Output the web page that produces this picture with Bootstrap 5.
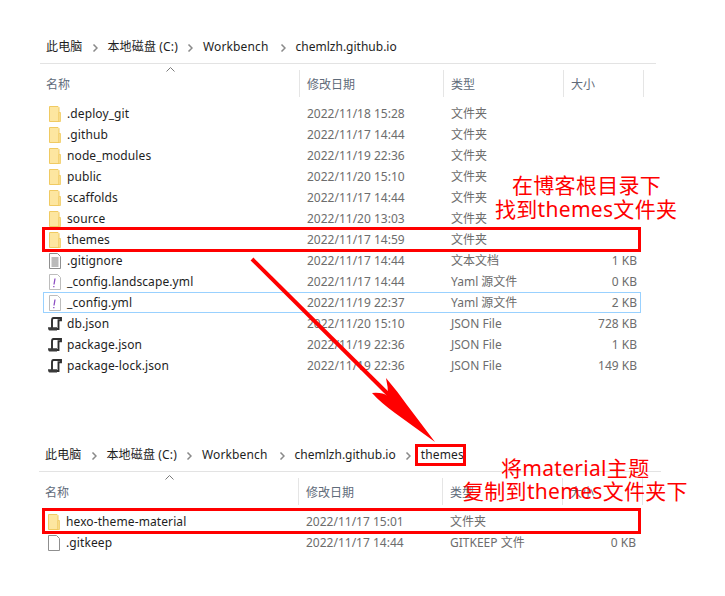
<!DOCTYPE html>
<html lang="en">
<head>
    <meta charset="UTF-8">
    <title>themes 文件夹</title>
    <link href="https://cdn.jsdelivr.net/npm/bootstrap@5.3.0/dist/css/bootstrap.min.css" rel="stylesheet">
    <style>
        body {
            background: #fff;
            font-family: "Noto Sans", "Noto Sans CJK SC", sans-serif;
            font-size: 12px;
            line-height: 21px;
            color: #1e1e1e;
        }
        .sheet {
            position: relative;
            width: 725px;
            height: 596px;
            overflow: hidden;
        }
        .pane-one { padding: 36px 0 0 40px; width: 656px; }
        .pane-two { padding: 0 0 0 39px; width: 661px; margin-top: 68px; }
        .crumbs {
            height: 21px;
            padding-left: 6px;
            letter-spacing: .15px;
        }
        .crumb-sep {
            width: 25px;
            text-align: center;
            color: #8a8a8a;
        }
        .crumb-sep svg { vertical-align: -1px; }
        .crumb-wide { margin-right: 2px; }
        .crumb-path { letter-spacing: 0; }
        .head-row {
            position: relative;
            height: 34px;
            margin-top: 6px;
            border-top: 1px solid #e3e3e3;
            padding-top: 6px;
            color: #5f6b7a;
        }
        .sort-mark { position: absolute; left: 126px; top: 3px; }
        .h-cell {
            height: 27px;
            line-height: 29px;
            padding-left: 7px;
            border-right: 1px solid #e5e5e5;
        }
        .h-cell.c-name { padding-left: 6px; }
        .c-name { width: 260px; flex: none; }
        .c-date { width: 144px; flex: none; }
        .c-type { width: 120px; flex: none; }
        .c-size { width: 80px; flex: none; }
        .file-row {
            height: 21px;
            color: #6d6d6d;
        }
        .file-row .c-name {
            color: #1e1e1e;
            display: flex;
            align-items: center;
            padding-left: 7px;
            letter-spacing: .1px;
        }
        .file-row .c-name svg { flex: none; margin-right: 4px; }
        .file-row .c-date { padding-left: 7px; }
        .file-row .c-type { padding-left: 7px; }
        .file-row .c-size { text-align: right; padding-right: 7px; }
        .list-gap { padding-top: 6px; }
        .picked { outline: 1px solid #99d1ff; outline-offset: -1px; width: 598px; margin-left: 3px; }
        .file-row.picked .c-name { width: 257px; padding-left: 4px; }
        .mark-box {
            position: absolute;
            border: 3px solid #f00;
        }
        .box-a { left: 42px; top: 227px; width: 599px; height: 25px; }
        .box-b { left: 42px; top: 508px; width: 599px; height: 26px; }
        .box-c { left: 415px; top: 444px; width: 51px; height: 22px; }
        .note-text {
            position: absolute;
            color: #f00;
            font-size: 21px;
            line-height: 24px;
            letter-spacing: .3px;
            white-space: nowrap;
        }
        .note-a { left: 512px; top: 173px; }
        .note-b { left: 495px; top: 197px; }
        .note-c { left: 501px; top: 456px; }
        .note-d { left: 463px; top: 479px; }
        .arrow-layer { position: absolute; left: 0; top: 0; }
    </style>
</head>
<body>
<svg width="0" height="0" class="position-absolute">
    <symbol id="ico-folder" viewBox="0 0 16 16">
        <path d="M2.500 .5h8.500l1 1v14H2.500z" fill="#fde6a0" stroke="#f0ca62"/>
        <path d="M12 6.500h1.500v9H12z" fill="#fde6a0" stroke="#f0ca62" stroke-width=".8"/>
    </symbol>
    <symbol id="ico-text" viewBox="0 0 16 16">
        <path d="M2.500 .5h8l3 3v12h-11z" fill="#fff" stroke="#8f8f8f"/>
        <path d="M4.500 5h7M4.500 7h7M4.500 9h7M4.500 11h7M4.500 13h7" stroke="#777" fill="none"/>
    </symbol>
    <symbol id="ico-yml" viewBox="0 0 16 16">
        <path d="M2.500 .5h8l3 3v12h-11z" fill="#fff" stroke="#bdbdbd"/>
        <path d="M8 4.500 7 10.500M6.800 12v1.200" stroke="#8d4fc4" stroke-width="1.300" fill="none"/>
    </symbol>
    <symbol id="ico-json" viewBox="0 0 16 16">
        <path d="M6.500 2H14v2.200h-2.500V13H5V4.500C5 3 5.500 2 6.500 2z" fill="#fff" stroke="#2e2e2e" stroke-width="1.900"/>
        <path d="M1 11.200h9V14.500H2.500C1.500 14.500 1 13 1 11.200z" fill="#3a3a3a"/>
    </symbol>
    <symbol id="ico-blank" viewBox="0 0 16 16">
        <path d="M2.500 .5h8l3 3v12h-11z" fill="#fff" stroke="#8f8f8f"/>
    </symbol>
    <symbol id="ico-sep" viewBox="0 0 6 8">
        <path d="M1.500 .5 5 4 1.500 7.500" fill="none" stroke="#8a8a8a" stroke-width="1.500"/>
    </symbol>
    <symbol id="ico-sort" viewBox="0 0 9 5">
        <path d="M.5 4.500 4.500 .5l4 4" fill="none" stroke="#7a7a7a"/>
    </symbol>
</svg>

<div class="sheet">
    <div class="pane-one">
        <div class="crumbs d-flex align-items-center">
            <span>此电脑</span>
            <span class="crumb-sep"><svg width="6" height="8"><use href="#ico-sep"/></svg></span>
            <span>本地磁盘 (C:)</span>
            <span class="crumb-sep"><svg width="6" height="8"><use href="#ico-sep"/></svg></span>
            <span class="crumb-wide">Workbench</span>
            <span class="crumb-sep"><svg width="6" height="8"><use href="#ico-sep"/></svg></span>
            <span class="crumb-path">chemlzh.github.io</span>
        </div>
        <div class="head-row d-flex">
            <svg class="sort-mark" width="9" height="5"><use href="#ico-sort"/></svg>
            <div class="h-cell c-name">名称</div>
            <div class="h-cell c-date">修改日期</div>
            <div class="h-cell c-type">类型</div>
            <div class="h-cell c-size">大小</div>
        </div>
        <div class="list-gap">
            <div class="file-row d-flex"><div class="c-name"><svg width="16" height="16"><use href="#ico-folder"/></svg>.deploy_git</div><div class="c-date">2022/11/18 15:28</div><div class="c-type">文件夹</div><div class="c-size"></div></div>
            <div class="file-row d-flex"><div class="c-name"><svg width="16" height="16"><use href="#ico-folder"/></svg>.github</div><div class="c-date">2022/11/17 14:44</div><div class="c-type">文件夹</div><div class="c-size"></div></div>
            <div class="file-row d-flex"><div class="c-name"><svg width="16" height="16"><use href="#ico-folder"/></svg>node_modules</div><div class="c-date">2022/11/19 22:36</div><div class="c-type">文件夹</div><div class="c-size"></div></div>
            <div class="file-row d-flex"><div class="c-name"><svg width="16" height="16"><use href="#ico-folder"/></svg>public</div><div class="c-date">2022/11/20 15:10</div><div class="c-type">文件夹</div><div class="c-size"></div></div>
            <div class="file-row d-flex"><div class="c-name"><svg width="16" height="16"><use href="#ico-folder"/></svg>scaffolds</div><div class="c-date">2022/11/17 14:44</div><div class="c-type">文件夹</div><div class="c-size"></div></div>
            <div class="file-row d-flex"><div class="c-name"><svg width="16" height="16"><use href="#ico-folder"/></svg>source</div><div class="c-date">2022/11/20 13:03</div><div class="c-type">文件夹</div><div class="c-size"></div></div>
            <div class="file-row d-flex"><div class="c-name"><svg width="16" height="16"><use href="#ico-folder"/></svg>themes</div><div class="c-date">2022/11/17 14:59</div><div class="c-type">文件夹</div><div class="c-size"></div></div>
            <div class="file-row d-flex"><div class="c-name"><svg width="16" height="16"><use href="#ico-text"/></svg>.gitignore</div><div class="c-date">2022/11/17 14:44</div><div class="c-type">文本文档</div><div class="c-size">1 KB</div></div>
            <div class="file-row d-flex"><div class="c-name"><svg width="16" height="16"><use href="#ico-yml"/></svg>_config.landscape.yml</div><div class="c-date">2022/11/17 14:44</div><div class="c-type">Yaml 源文件</div><div class="c-size">0 KB</div></div>
            <div class="file-row d-flex picked"><div class="c-name"><svg width="16" height="16"><use href="#ico-yml"/></svg>_config.yml</div><div class="c-date">2022/11/19 22:37</div><div class="c-type">Yaml 源文件</div><div class="c-size">2 KB</div></div>
            <div class="file-row d-flex"><div class="c-name"><svg width="16" height="16"><use href="#ico-json"/></svg>db.json</div><div class="c-date">2022/11/20 15:10</div><div class="c-type">JSON File</div><div class="c-size">728 KB</div></div>
            <div class="file-row d-flex"><div class="c-name"><svg width="16" height="16"><use href="#ico-json"/></svg>package.json</div><div class="c-date">2022/11/19 22:36</div><div class="c-type">JSON File</div><div class="c-size">1 KB</div></div>
            <div class="file-row d-flex"><div class="c-name"><svg width="16" height="16"><use href="#ico-json"/></svg>package-lock.json</div><div class="c-date">2022/11/19 22:36</div><div class="c-type">JSON File</div><div class="c-size">149 KB</div></div>
        </div>
    </div>

    <div class="pane-two">
        <div class="crumbs d-flex align-items-center">
            <span>此电脑</span>
            <span class="crumb-sep"><svg width="6" height="8"><use href="#ico-sep"/></svg></span>
            <span>本地磁盘 (C:)</span>
            <span class="crumb-sep"><svg width="6" height="8"><use href="#ico-sep"/></svg></span>
            <span class="crumb-wide">Workbench</span>
            <span class="crumb-sep"><svg width="6" height="8"><use href="#ico-sep"/></svg></span>
            <span class="crumb-path">chemlzh.github.io</span>
            <span class="crumb-sep"><svg width="6" height="8"><use href="#ico-sep"/></svg></span>
            <span>themes</span>
        </div>
        <div class="head-row d-flex">
            <svg class="sort-mark" width="9" height="5"><use href="#ico-sort"/></svg>
            <div class="h-cell c-name">名称</div>
            <div class="h-cell c-date">修改日期</div>
            <div class="h-cell c-type">类型</div>
            <div class="h-cell c-size">大小</div>
        </div>
        <div class="list-gap">
            <div class="file-row d-flex"><div class="c-name"><svg width="16" height="16"><use href="#ico-folder"/></svg>hexo-theme-material</div><div class="c-date">2022/11/17 15:01</div><div class="c-type">文件夹</div><div class="c-size"></div></div>
            <div class="file-row d-flex"><div class="c-name"><svg width="16" height="16"><use href="#ico-blank"/></svg>.gitkeep</div><div class="c-date">2022/11/17 14:44</div><div class="c-type">GITKEEP 文件</div><div class="c-size">0 KB</div></div>
        </div>
    </div>

    <div class="mark-box box-a"></div>
    <div class="mark-box box-b"></div>
    <div class="mark-box box-c"></div>
    <svg class="arrow-layer" width="725" height="596">
        <path d="M252 259 392 398" stroke="#f00" stroke-width="4" fill="none"/>
        <path d="M435 442 395 413Q380 402 372 393 382 392 388 396 388 386 386 378 398 392 407 405z" fill="#f00"/>
    </svg>
    <div class="note-text note-a">在博客根目录下</div>
    <div class="note-text note-b">找到themes文件夹</div>
    <div class="note-text note-c">将material主题</div>
    <div class="note-text note-d">复制到themes文件夹下</div>
</div>

<script src="https://cdn.jsdelivr.net/npm/bootstrap@5.3.0/dist/js/bootstrap.bundle.min.js"></script>
</body>
</html>
